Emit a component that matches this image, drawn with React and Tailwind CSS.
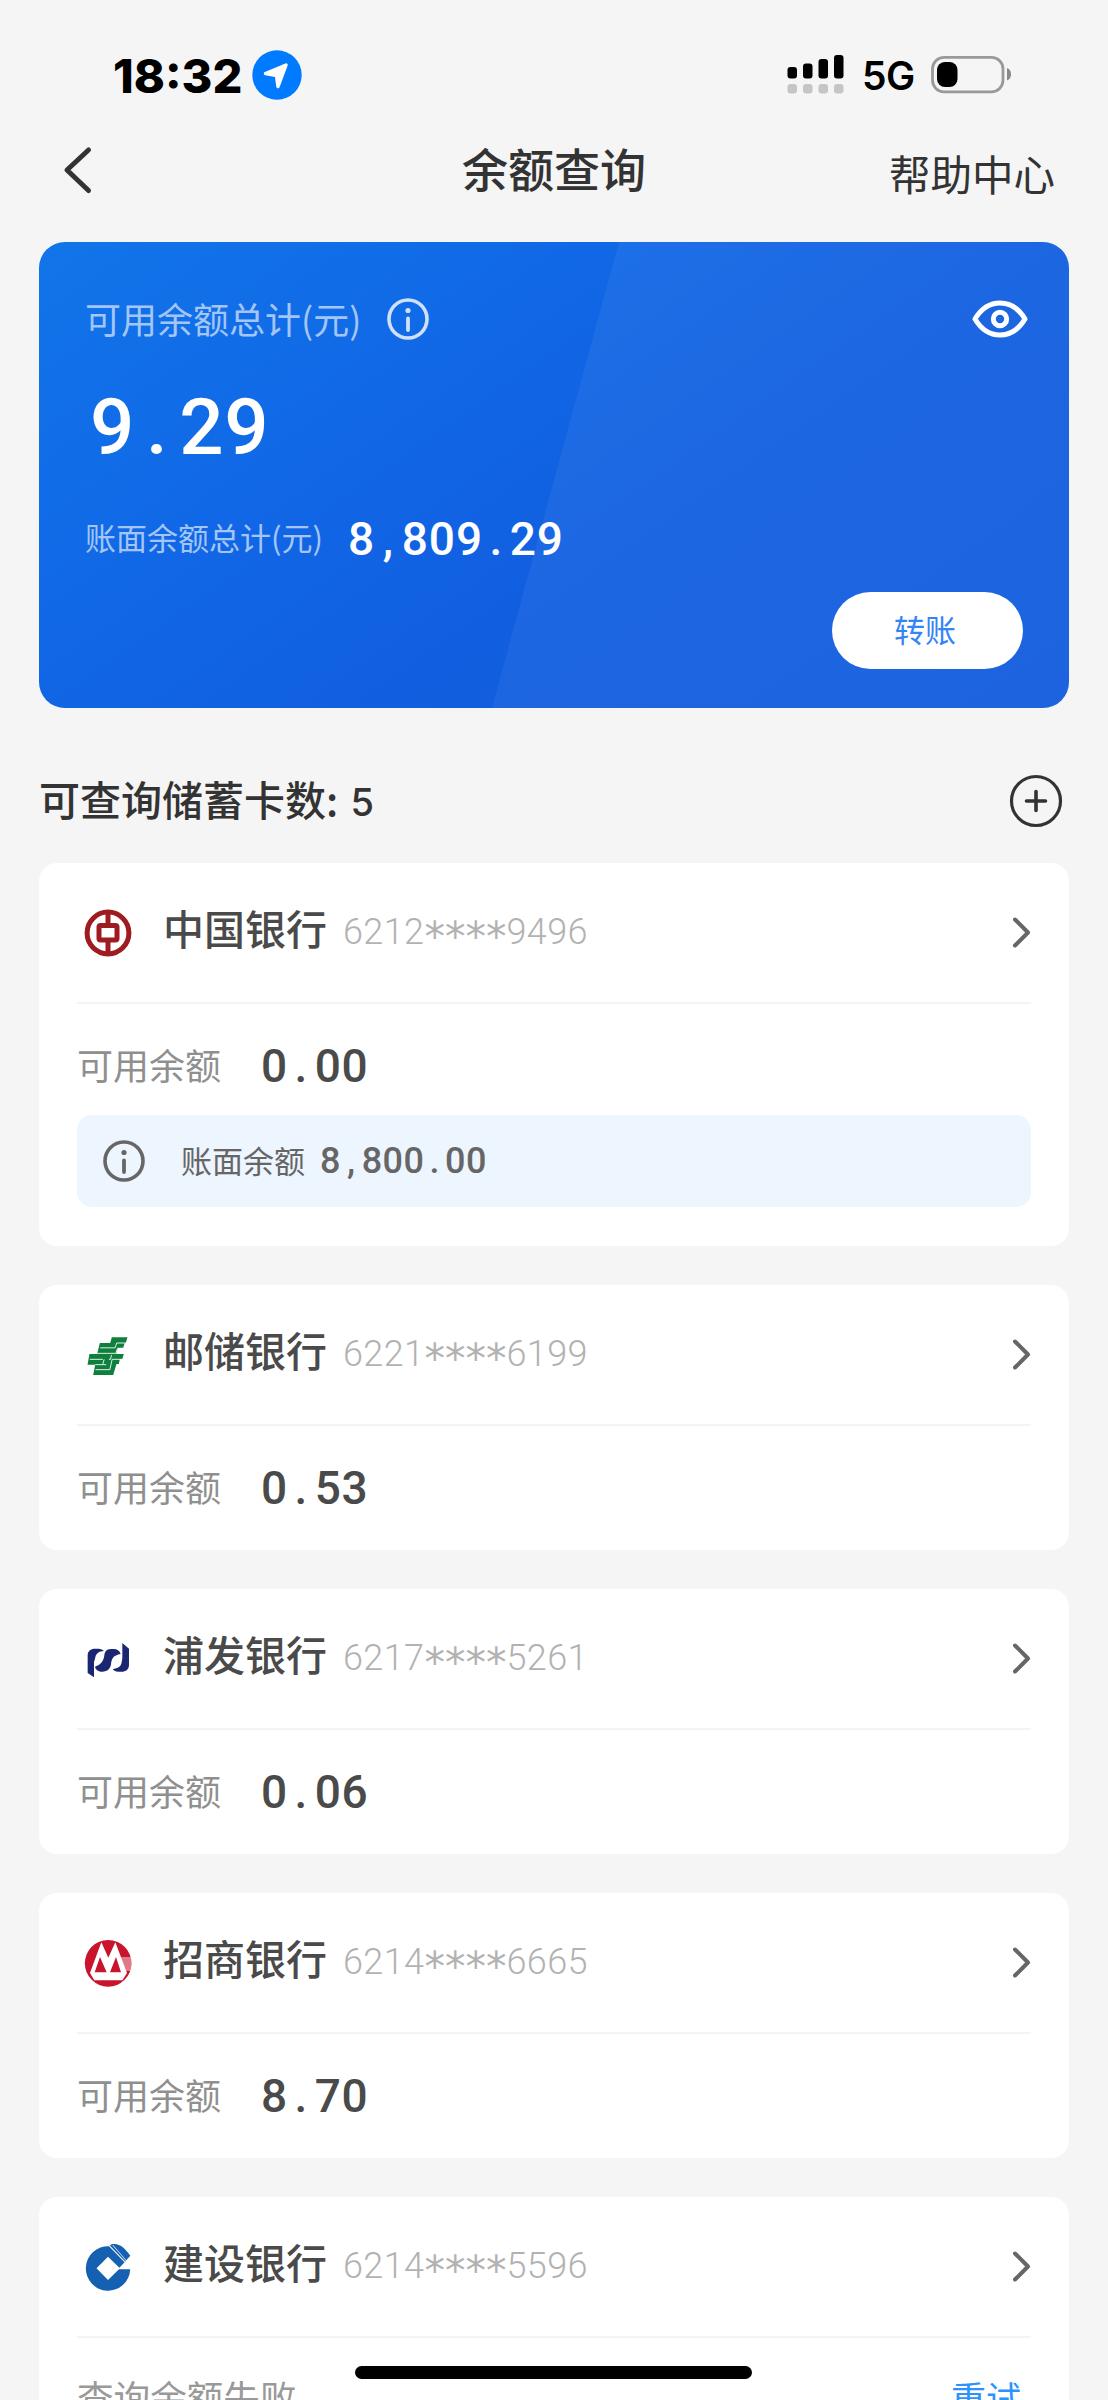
import React from 'react';

const cards = [
  { id: 'boc', name: '中国银行', number: ['6212', '9496'], balance: '0.00', book: '8,800.00', logo: BocLogo },
  { id: 'psbc', name: '邮储银行', number: ['6221', '6199'], balance: '0.53', logo: PsbcLogo },
  { id: 'spdb', name: '浦发银行', number: ['6217', '5261'], balance: '0.06', logo: SpdbLogo },
  { id: 'cmb', name: '招商银行', number: ['6214', '6665'], balance: '8.70', logo: CmbLogo },
  { id: 'ccb', name: '建设银行', number: ['6214', '5596'], failed: true, logo: CcbLogo },
];

function BocLogo() {
  return (
    <svg className="size-[60px]" viewBox="0 0 60 60" fill="none" stroke="#9e1b20">
      <circle cx="30" cy="30" r="20.900" strokeWidth="5" />
      <rect x="21" y="22.500" width="18" height="14.600" rx="1.600" strokeWidth="5" />
      <path d="M30 9v12M30 39v12" strokeWidth="5" />
    </svg>
  );
}

function PsbcLogo() {
  return (
    <svg className="size-[60px]" viewBox="-16.5 -18 180 180">
      <path d="M85 19H132L127 35H124L119 50H103L98 69H121L116 85H109L106 99H99L89 132H29L35 101H12L18 69H41L49 36H80Z" fill="#0f7f3d" />
      <path d="M50 50.500H95L99.500 36H126M41 67H97L102 52M19 85H58M76 85H81L84 72M36 116H79L86 85H116M35 101H68M62 85L58 100" fill="none" stroke="#fff" strokeWidth="2.600" />
    </svg>
  );
}

function SpdbLogo() {
  return (
    <svg className="size-[60px]" viewBox="25 9 180 180" fill="#1b2673">
      <path d="M54 88C54 75 63 68 76 68H86C94 68 99 71 103 75C88 76 79 82 77 94C76 102 73 105 73 110V154L54 141Z" />
      <path d="M132 69H124C110 69 105 78 104 88C102 105 93 117 76 122C78 132 87 137 98 137C113 137 122 129 124 115C126 98 130 88 153 84C150 74 142 69 132 69Z" />
      <path d="M178 68V116C178 130 169 137 155 137H146C138 137 132 134 129 129C145 128 154 122 156 109C157 103 158 99 158 94V51Z" />
    </svg>
  );
}

function CmbLogo() {
  return (
    <svg className="size-[60px]" viewBox="25 21 180 180">
      <circle cx="115.500" cy="112" r="70" fill="#c8152d" />
      <path d="M95 49L116 95L137 49L172 141L158 163H74L61 141Z" fill="#fff" />
      <path d="M75 139L91 93L111 139ZM121 139L139 93L154 139Z" fill="#c8152d" />
      <path d="M151 96H184M153 102H186M155 108H186M157 114H186M160 120H186M162 126H185M164 132H184" stroke="#fff" strokeWidth="2.600" />
    </svg>
  );
}

function CcbLogo() {
  return (
    <svg className="size-[60px]" viewBox="0 0 60 60" fill="#1560b0">
      <path d="M31 9.300A22.200 22.200 0 1 0 52.200 32.300H41L30 43L18.500 31.300L30 19.700L41.400 30.700L46.600 25.300Z" />
      <path d="M31.500 8.200L34.200 8L48 23.700L47.300 24.500Z" />
      <path d="M32.500 7.400C42 5.500 47 11.500 52.300 18.700L48.300 23.200L35.500 8.600Z" />
    </svg>
  );
}

function InfoIcon({ className }) {
  return (
    <svg className={className} viewBox="0 0 42 42" fill="none" stroke="currentColor">
      <circle cx="21" cy="21" r="19" strokeWidth="3.600" />
      <path d="M21 20.500V32" strokeWidth="3.800" strokeLinecap="round" />
      <circle cx="21" cy="12.500" r="2.600" fill="currentColor" stroke="none" />
    </svg>
  );
}

// digits sit on a fixed pitch, punctuation takes a full cell
function Amount({ value, className, mark }) {
  return (
    <span className={`whitespace-nowrap ${className}`}>
      {value.split(/([.,])/).map((part, i) =>
        part === '.' || part === ',' ? (
          <span key={i} className={`inline-block text-center ${mark}`}>{part}</span>
        ) : (
          part
        )
      )}
    </span>
  );
}

function StatusBar() {
  return (
    <div className="flex h-[122px] items-start pl-[113px] pr-[95px]">
      <span className="mt-[48px] w-[131px] whitespace-nowrap font-['Inter'] text-[47px] font-extrabold leading-[56px]">18:32</span>
      <svg className="ml-[8px] mt-[50px] size-[50px]" viewBox="0 0 50 50">
        <circle cx="25" cy="25" r="24.700" fill="#007aff" />
        <path d="M13.500 23.500L34 15L26 36.500L24.500 25.500Z" fill="#fff" stroke="#fff" strokeWidth="3.500" strokeLinejoin="round" />
      </svg>
      <div className="flex-1" />
      <svg className="mt-[54px] h-[42px] w-[58px]" viewBox="0 0 58 42">
        <rect x="0.500" y="13" width="9.500" height="11.500" rx="3" />
        <rect x="16" y="9.500" width="9.500" height="15" rx="3" />
        <rect x="31.500" y="5" width="9.500" height="19.500" rx="3" />
        <rect x="47" y="1" width="9.500" height="23.500" rx="3" />
        <g fill="#c5c5c5">
          <rect x="0.500" y="30" width="9.500" height="9.500" rx="3" />
          <rect x="16" y="30" width="9.500" height="9.500" rx="3" />
          <rect x="31.500" y="30" width="9.500" height="9.500" rx="3" />
          <rect x="47" y="30" width="9.500" height="9.500" rx="3" />
        </g>
      </svg>
      <span className="ml-[17px] mt-[52px] w-[52px] whitespace-nowrap font-['Inter'] text-[39px] font-semibold leading-[48px] tracking-[-0.5px]">5G</span>
      <svg className="ml-[17px] mt-[55px] h-[39px] w-[82px]" viewBox="0 0 82 39">
        <rect x="1.500" y="2.300" width="70.500" height="34.500" rx="11.500" fill="none" stroke="#999" strokeWidth="2.800" />
        <rect x="6" y="7" width="20.500" height="25" rx="8" />
        <path d="M76 13Q80 14.500 80 19.200T76 25.500Z" fill="#888" />
      </svg>
    </div>
  );
}

function Header() {
  return (
    <div className="grid h-[120px] grid-cols-[1fr_auto_1fr] items-start text-[#333]">
      <svg className="ml-[62px] mt-[23px] h-[50px] w-[32px]" viewBox="0 0 32 50" fill="none" stroke="currentColor" strokeWidth="5" strokeLinecap="round" strokeLinejoin="round">
        <path d="M26.500 5L5 25L26.500 45.500" />
      </svg>
      <h1 className="mt-[17px] text-[46px] font-medium leading-[56px]">余额查询</h1>
      <span className="mr-[53px] mt-[23px] text-right text-[41.500px] leading-[56px]">帮助中心</span>
    </div>
  );
}

function SummaryCard() {
  return (
    <div className="relative ml-[39px] flex h-[466px] w-[1030px] flex-col overflow-hidden rounded-[26px] bg-linear-[145deg,#1175e9_0%,#1167e6_35%,#115edf_62%,#115bde_100%] text-white">
      <div className="absolute inset-0 bg-white/5 [clip-path:polygon(580px_0,100%_0,100%_100%,453px_100%)]" />
      <div className="relative mt-[52px] flex h-[50px] items-center pl-[46px] pr-[40px]">
        <span className="-mt-[3px] text-[36px] text-[#a3c5f7]">可用余额总计(元)</span>
        <InfoIcon className="ml-[26px] size-[42px] text-[#cfe0fa]" />
        <svg className="ml-auto h-[42px] w-[58px]" viewBox="0 0 58 42" fill="none" stroke="currentColor" strokeWidth="5">
          <path d="M4 21C10 11 19 5 29 5S48 11 54 21C48 31 39 37 29 37S10 31 4 21Z" strokeLinejoin="round" />
          <circle cx="29" cy="21" r="6.700" />
        </svg>
      </div>
      <Amount value="9.29" className="relative mt-[35px] pl-[51px] font-['Roboto'] text-[78px] font-medium leading-[98px] tracking-[0.5px]" mark="w-[44.500px]" />
      <div className="relative mt-[30px] flex h-[62px] items-center pl-[46px]">
        <span className="-mt-[2px] text-[31px] text-[#a3c5f7]">账面余额总计(元)</span>
        <Amount value="8,809.29" className="ml-[25px] mt-[2px] font-['Roboto'] text-[46px] font-medium tracking-[0.9px]" mark="w-[26.800px]" />
      </div>
      <button className="relative ml-[793px] mt-[23px] h-[77px] w-[191px] shrink-0 rounded-full bg-white pb-[2px] pr-[5px] text-[31px] text-[#3384f5]">转账</button>
    </div>
  );
}

function BankCard({ card }) {
  const Logo = card.logo;
  return (
    <div className="w-[1030px] rounded-[18px] bg-white px-[38px]">
      <div className="flex h-[139px] items-center">
        <div className="ml-[1px]">
          <Logo />
        </div>
        <span className="-mt-[11px] ml-[25px] text-[41px] font-medium leading-[50px] text-[#4a4a4a]">{card.name}</span>
        <span className="-mt-[1px] ml-[16px] whitespace-nowrap font-['Roboto'] text-[36px] font-[350] leading-[44px] tracking-[0.4px] text-[#b2b2b2]">
          {card.number[0]}
          <span className="relative top-[7px] font-['DejaVu_Sans'] text-[41px] font-normal leading-[20px] tracking-[0]">****</span>
          {card.number[1]}
        </span>
        <svg className="ml-auto h-[34px] w-[22px] text-[#666]" viewBox="0 0 22 34" fill="none" stroke="currentColor" strokeWidth="4" strokeLinecap="round" strokeLinejoin="round">
          <path d="M6 3.500L19 16.500L6 29.500" />
        </svg>
      </div>
      <div className="h-[2px] bg-[#f4f4f4]" />
      <div className="flex h-[124px] items-center text-[36px]">
        {card.failed ? (
          <>
            <span className="-mt-[5px] text-[36.600px] text-[#999]">查询余额失败</span>
            <button className="-mt-[5px] ml-auto mr-[10px] text-[35px] text-[#2b93fb]">重试</button>
          </>
        ) : (
          <>
            <span className="-mt-[4px] text-[#8f8f8f]">可用余额</span>
            <Amount value={card.balance} className="ml-[40px] mt-[1px] font-['Roboto'] text-[46px] font-medium tracking-[0.7px] text-[#4a4a4a]" mark="w-[26.800px]" />
          </>
        )}
      </div>
      {card.book && (
        <div className="-mt-[13px] pb-[39px]">
          <div className="flex h-[92px] items-center rounded-[15px] bg-[#edf5ff] pl-[26px] text-[#666]">
            <InfoIcon className="size-[42px]" />
            <span className="-mt-[2px] ml-[36px] text-[31px]">账面余额</span>
            <Amount value={card.book} className="ml-[15px] font-['Roboto'] text-[36px] font-medium tracking-[0.4px]" mark="w-[20.800px]" />
          </div>
        </div>
      )}
    </div>
  );
}

const App = () => {
  return (
    <div className="relative h-[2400px] w-[1108px] overflow-hidden bg-[#f5f5f5] font-['Noto_Sans_CJK_SC',sans-serif] text-black">
      <StatusBar />
      <Header />
      <SummaryCard />

      <div className="flex h-[155px] items-center pl-[39px] pr-[45px] pt-[31px] text-[#333]">
        <h2 className="-mt-[3px] text-[41px] font-medium">
          可查询储蓄卡数: <span className="ml-[3px] font-['Inter'] text-[38px]">5</span>
        </h2>
        <svg className="ml-auto size-[54px]" viewBox="0 0 54 54" fill="none" stroke="currentColor" strokeLinecap="round">
          <circle cx="27" cy="27" r="24.500" strokeWidth="3.200" />
          <path d="M27 17.500v19M17.500 27h19" strokeWidth="3.600" />
        </svg>
      </div>

      <div className="ml-[39px] flex flex-col gap-[39px]">
        {cards.map((card) => (
          <BankCard key={card.id} card={card} />
        ))}
      </div>

      <div className="absolute left-[355px] top-[2366px] h-[13px] w-[397px] rounded-full bg-black" />
    </div>
  );
};

export default App;
